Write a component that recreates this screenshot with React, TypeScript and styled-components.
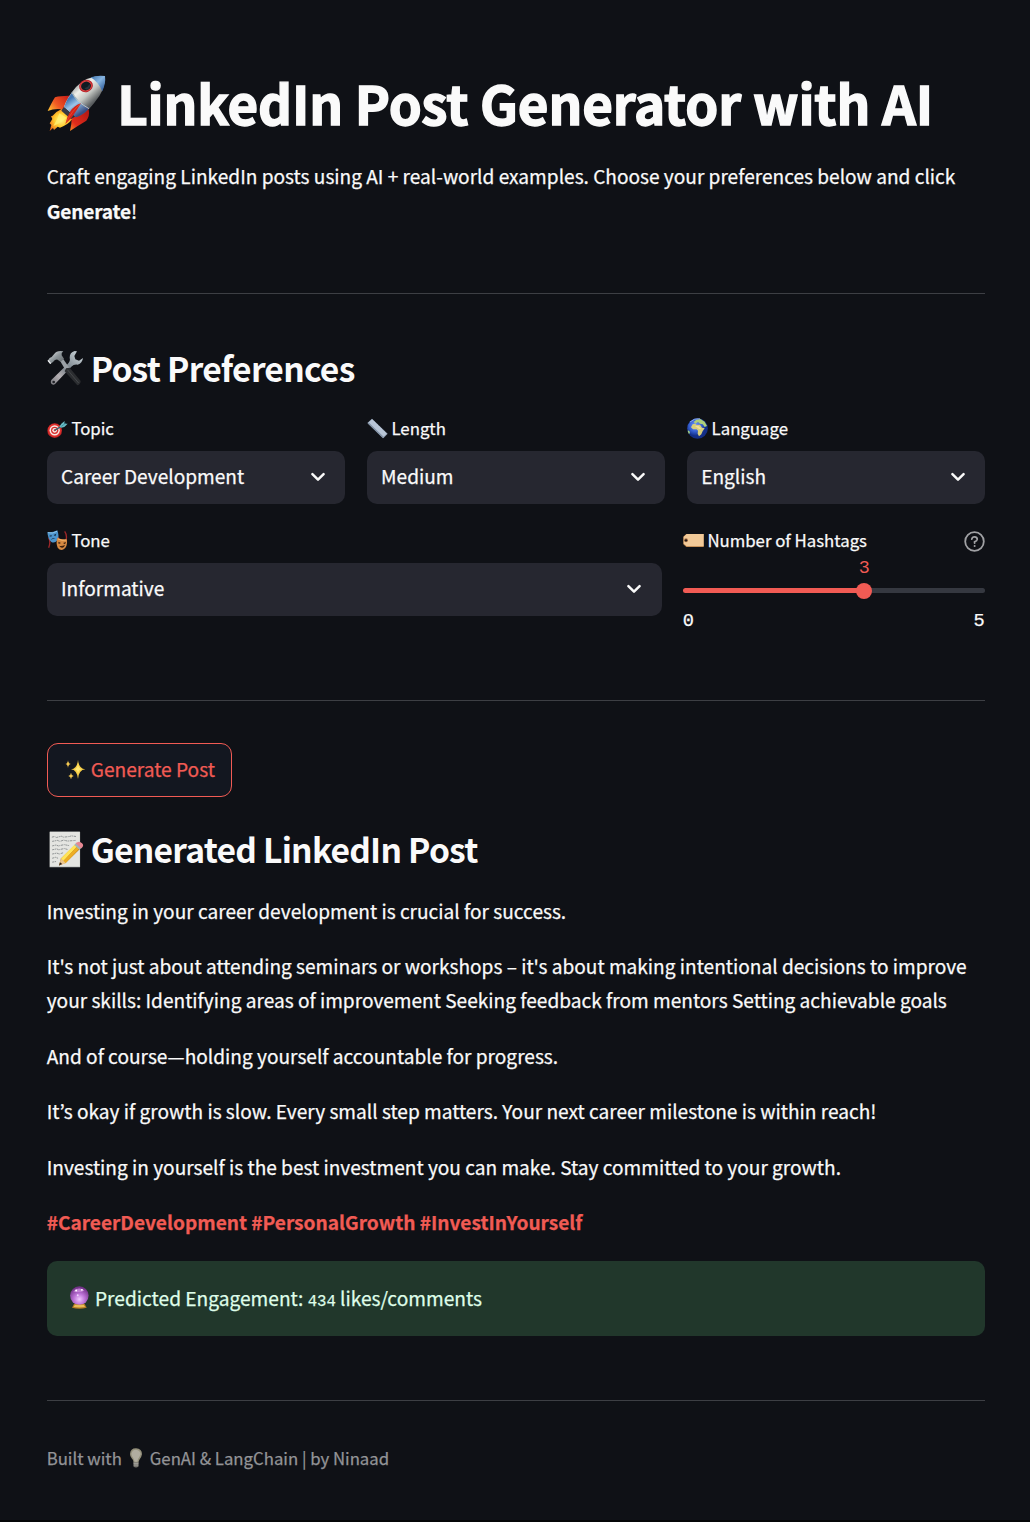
import React from 'react';
import styled, { createGlobalStyle } from 'styled-components';

const Global = createGlobalStyle`
  * { box-sizing: border-box; }
  body {
    margin: 0;
    background: #0f1116;
    color: #fafafa;
    font-family: "Noto Sans CJK KR", "Noto Sans", sans-serif;
    font-size: 19.1px;
    line-height: 34.4px;
    -webkit-text-stroke: 0.25px currentColor;
  }
`;

const Page = styled.main`
  height: 1522px;
  padding: 70px 45px 0 46.7px;
  border-bottom: 2px solid #050608;
  display: flex;
  flex-direction: column;
  overflow: hidden;
`;
const Title = styled.h1`
  margin: 0;
  height: 70px;
  display: flex;
  align-items: center;
  gap: 11.5px;
  font-size: 52.9px;
  line-height: 70px;
  font-weight: 700;
  letter-spacing: -0.16px;
  white-space: nowrap;
  -webkit-text-stroke: 1.4px currentColor;
  span { padding-bottom: 6px; }
  svg { margin-bottom: 2px; }
`;
const Intro = styled.p`
  margin: 19px 0 63.8px;
  line-height: 35px;
  b { letter-spacing: -0.15px; }
`;
const Divider = styled.hr`
  width: 100%;
  height: 1px;
  margin: 0;
  border: 0;
  flex: none;
  background: #3d3f44;
`;
const Heading = styled.h3<{ $top: number }>`
  margin: ${p => p.$top}px 0 0;
  height: 44px;
  display: flex;
  align-items: center;
  gap: 7px;
  font-size: 33.6px;
  line-height: 44px;
  font-weight: 700;
  letter-spacing: -0.74px;
  -webkit-text-stroke: 0;
  span { padding-bottom: 4px; }
  svg { margin-bottom: 2px; }
`;
const Columns = styled.div<{ $cols: string; $gap: number; $top: number }>`
  display: grid;
  grid-template-columns: ${p => p.$cols};
  column-gap: ${p => p.$gap}px;
  margin-top: ${p => p.$top}px;
`;
const Label = styled.div`
  height: 28px;
  display: flex;
  align-items: center;
  gap: 3.7px;
  font-size: 16.8px;
  line-height: 28px;
  & > span:nth-child(2) { padding-bottom: 2px; }
`;
const HelpSlot = styled.span`
  display: flex;
  margin-left: auto;
  padding-top: 1px;
`;
const SelectBox = styled.div<{ $end: number }>`
  height: 53px;
  margin-top: 8px;
  padding: 0 ${p => p.$end}px 0 14.3px;
  border-radius: 10px;
  background: #262730;
  display: flex;
  align-items: center;
  justify-content: space-between;
  font-size: 19.1px;
  span { padding-bottom: 2px; }
`;
const Slider = styled.div`
  margin-top: 33px;
`;
const Track = styled.div<{ $pct: number }>`
  position: relative;
  height: 5px;
  border-radius: 3px;
  background: linear-gradient(to right, #f15b54 ${p => p.$pct}%, #353840 ${p => p.$pct}%);
`;
const Thumb = styled.span<{ $pct: number }>`
  position: absolute;
  left: ${p => p.$pct}%;
  top: 50%;
  width: 16px;
  height: 16px;
  margin: -7.7px 0 0 -7.7px;
  border-radius: 50%;
  background: #f15b54;
`;
const ThumbValue = styled.span`
  position: absolute;
  left: 50%;
  bottom: 17px;
  transform: translateX(-50%);
  color: #f15b54;
  font: 400 18.4px/26px "Liberation Mono", monospace;
  -webkit-text-stroke: 0;
`;
const Ticks = styled.div`
  display: flex;
  justify-content: space-between;
  margin-top: 15px;
  font: 400 18.67px/26px "Liberation Mono", monospace;
`;
const GenerateButton = styled.button`
  align-self: flex-start;
  flex: none;
  width: 185px;
  height: 54px;
  margin: 42px 0 0;
  padding: 0 0 1px 17px;
  display: flex;
  align-items: center;
  gap: 5px;
  border: 1px solid #f15b54;
  border-radius: 11px;
  background: #131720;
  color: #f15b54;
  font-family: inherit;
  font-size: 19.15px;
  white-space: nowrap;
`;
const Post = styled.article`
  margin-top: 21px;
  display: flex;
  flex-direction: column;
  gap: 21.3px;
  line-height: 34.15px;
`;
const Para = styled.p`
  margin: 0;
`;
const Tags = styled.strong`
  color: #f15b54;
  font-weight: 700;
`;
const Success = styled.div`
  height: 75px;
  flex: none;
  margin: 21.7px 0 64px;
  padding-left: 21px;
  display: flex;
  align-items: center;
  gap: 6.3px;
  border-radius: 10px;
  background: #21372b;
  color: #dffde9;
  font-size: 19.15px;
`;
const Code = styled.code`
  font: 400 15.6px "Liberation Mono", monospace;
`;
const Footer = styled.footer`
  margin-top: 43px;
  height: 28px;
  display: flex;
  align-items: center;
  gap: 8px;
  color: #939497;
  font-size: 16.75px;
  line-height: 28px;
`;
const Glyph = styled.svg<{ $s: number }>`
  width: ${p => p.$s}px;
  height: ${p => p.$s}px;
  flex: none;
  display: block;
`;

const Rocket = () => (
  <Glyph $s={59} viewBox="10 15 177 177">
    <defs>
      <linearGradient id="rb" x1="80" y1="50" x2="135" y2="110" gradientUnits="userSpaceOnUse">
        <stop offset="0" stopColor="#8d9294" /><stop offset=".35" stopColor="#f0f0ea" /><stop offset=".65" stopColor="#c3c6c2" /><stop offset="1" stopColor="#595d5f" />
      </linearGradient>
      <linearGradient id="rn" x1="145" y1="15" x2="185" y2="55" gradientUnits="userSpaceOnUse">
        <stop offset="0" stopColor="#3f74ae" /><stop offset=".5" stopColor="#86b4e0" /><stop offset="1" stopColor="#2f5c9b" />
      </linearGradient>
      <linearGradient id="rl" x1="80" y1="85" x2="112" y2="130" gradientUnits="userSpaceOnUse">
        <stop offset="0" stopColor="#4377b3" /><stop offset=".4" stopColor="#9cc5e9" /><stop offset="1" stopColor="#3a4f83" />
      </linearGradient>
      <linearGradient id="rf" x1="20" y1="125" x2="75" y2="80" gradientUnits="userSpaceOnUse">
        <stop offset="0" stopColor="#ffbb30" /><stop offset=".4" stopColor="#f15a24" /><stop offset="1" stopColor="#c91d17" />
      </linearGradient>
      <linearGradient id="rr" x1="80" y1="182" x2="130" y2="130" gradientUnits="userSpaceOnUse">
        <stop offset="0" stopColor="#f68a27" /><stop offset=".35" stopColor="#e02c1b" /><stop offset="1" stopColor="#b71a14" />
      </linearGradient>
      <radialGradient id="fl" cx="52" cy="150" r="40" gradientUnits="userSpaceOnUse">
        <stop offset="0" stopColor="#fff58a" /><stop offset=".5" stopColor="#ffcb2f" /><stop offset="1" stopColor="#ee6a17" />
      </radialGradient>
    </defs>
    <path d="M92 78 Q55 76 34 82 Q25 96 12 123 Q35 114 61 119Z" fill="url(#rf)" />
    <path d="M135 118 Q139 139 128 152 Q106 165 79 183 Q84 163 84 145Z" fill="url(#rr)" />
    <path d="M54 117 Q36 125 27 137 L22 139 L26 147 L18 160 L23 165 L18 183 L28 174 L31 180 L42 170 L49 173 Q75 163 86 147Z" fill="url(#fl)" />
    <path d="M47 130 Q42 148 29 168 Q55 157 69 143Z" fill="#fff176" opacity=".75" />
    <path d="M61 110 L91 140 L82 148 L53 122Z" fill="#343844" />
    <path d="M184 18 Q186 60 152 98 Q126 132 96 142 L61 110 Q72 80 97 51 Q129 15 184 18Z" fill="url(#rb)" />
    <path d="M184 18 Q187 39 176 64 Q164 36 141 22 Q161 15 184 18Z" fill="url(#rn)" />
    <path d="M86 67 Q98 93 138 114 Q115 138 96 142 L61 110 Q69 87 86 67Z" fill="url(#rl)" />
    <path d="M85 68 Q98 95 136 116" fill="none" stroke="#d8d1b8" strokeWidth="2.5" />
    <ellipse cx="127" cy="48" rx="21" ry="18" transform="rotate(-20 127 48)" fill="#b8212a" />
    <ellipse cx="127" cy="48" rx="18" ry="16" transform="rotate(-20 127 48)" fill="#e04642" />
    <ellipse cx="127" cy="48" rx="15" ry="13" transform="rotate(-20 127 48)" fill="#101a22" />
    <path d="M122 55 Q134 51 138 42 Q142 54 130 59Z" fill="#536470" opacity=".35" />
    <path d="M112 100 Q91 107 80 124 Q70 140 65 162 Q84 146 96 125Z" fill="#d3241a" />
    <path d="M109 103 Q85 122 68 156" fill="none" stroke="#f4532f" strokeWidth="2" />
  </Glyph>
);
const Tools = () => (
  <Glyph $s={37} viewBox="9 13 111 111">
    <defs>
      <linearGradient id="th" x2="1" y2="1"><stop stopColor="#f4f6f7" /><stop offset=".5" stopColor="#8d9599" /><stop offset="1" stopColor="#5b6063" /></linearGradient>
      <linearGradient id="tw" x1="100" y1="30" x2="25" y2="110" gradientUnits="userSpaceOnUse"><stop stopColor="#b9c3c9" /><stop offset=".45" stopColor="#768088" /><stop offset=".75" stopColor="#b4afb2" /><stop offset="1" stopColor="#85858a" /></linearGradient>
    </defs>
    <path d="M92 16 Q77 20 77 36 Q80 46 71 55 L22 103 Q18 111 24 116 Q31 119 36 112 L82 63 Q90 55 101 57 Q115 53 117 37 L105 45 L94 41 L91 31 L99 17Z" fill="url(#tw)" />
    <circle cx="29" cy="109" r="4" fill="#202227" />
    <path d="M48 45 L56 38 L77 68 L66 76Z" fill="#9ba1a6" />
    <path d="M66 68 L77 66 L110 106 Q110 116 100 119 L62 77Z" fill="#2b2d30" />
    <path d="M70 72 L104 112" stroke="#515457" strokeWidth="2" />
    <path d="M58 17 Q39 13 30 26 Q25 34 17 37 L11 45 L19 55 L27 49 Q34 40 41 42 L50 49 L60 39 L53 29 Q51 22 58 17Z" fill="url(#th)" />
    <path d="M12 44 L20 54" stroke="#eef0f2" strokeWidth="4" />
  </Glyph>
);
const Target = () => (
  <Glyph $s={21} viewBox="0 0 63 63">
    <circle cx="23" cy="38" r="22" fill="#b82325" /><circle cx="23" cy="37" r="20" fill="#df302d" />
    <circle cx="23" cy="37" r="15.5" fill="#f6e9e5" /><circle cx="23" cy="37" r="11" fill="#d92e2c" />
    <circle cx="23" cy="37" r="7" fill="#fbe8e5" /><circle cx="23" cy="37" r="3" fill="#d33" />
    <path d="M23 37L49 21" stroke="#32606c" strokeWidth="4" />
    <path d="M37 26 L43 17 L53 9 L52 17 L62 17 L52 27 L43 29Z" fill="#68bac2" />
    <path d="M43 25L57 15" stroke="#2b8496" strokeWidth="2" />
  </Glyph>
);
const Ruler = () => (
  <Glyph $s={21} viewBox="0 0 63 63">
    <path d="M1 15L15 2L62 47L49 61Z" fill="#8e9daf" />
    <path d="M4 14L15 4L59 47L50 56Z" fill="#b8c5d6" />
    <path d="M4 15L49 59" stroke="#8494a8" strokeWidth="4" />
    <path d="M17 7L58 47" stroke="#cad4e3" strokeWidth="3" strokeDasharray="3 3" />
  </Glyph>
);
const Globe = () => (
  <Glyph $s={21} viewBox="0 0 63 63">
    <defs><radialGradient id="sea" cx=".4" cy=".35"><stop stopColor="#7799ff" /><stop offset=".6" stopColor="#355fd0" /><stop offset="1" stopColor="#132e86" /></radialGradient></defs>
    <circle cx="31.5" cy="31.5" r="31" fill="url(#sea)" />
    <path d="M17 19L24 17L29 21L39 20L45 29L53 31L47 39L43 49L36 55L32 47L33 38L29 34L18 34L12 28Z" fill="#d9cf79" />
    <path d="M20 12L28 5L40 3L53 11L60 24L53 27L47 19L39 17L33 12L25 17Z" fill="#aecf79" />
    <path d="M24 24L35 24L43 33L36 33Z" fill="#f1dc9c" />
    <path d="M2 38Q8 35 9 46L5 47Z" fill="#a7d47e" />
    <path d="M9 12Q22 0 39 2" stroke="#adc9ff" strokeWidth="3" fill="none" opacity=".7" />
  </Glyph>
);
const Masks = () => (
  <Glyph $s={21} viewBox="0 0 63 63">
    <path d="M5 23Q12 36 5 53M53 4Q62 16 56 35M29 4Q25 13 36 27" fill="none" stroke="#9e2729" strokeWidth="4" />
    <path d="M1 6Q15 9 31 1Q38 20 31 31Q23 41 13 36Q3 29 1 6Z" fill="#4c94cc" />
    <path d="M3 8Q17 12 30 4" stroke="#8cc4e9" strokeWidth="3" fill="none" />
    <path d="M6 18L14 15L13 20ZM20 15L28 11L25 19ZM11 30Q18 20 26 26Q20 25 11 30Z" fill="#14283e" />
    <path d="M31 23Q43 30 60 28Q62 51 50 58Q40 63 32 53Q26 39 31 23Z" fill="#d68a42" />
    <path d="M34 35L42 39L35 42ZM48 39L57 36L54 43ZM36 47Q44 49 54 45Q49 61 36 47Z" fill="#3d210f" />
    <path d="M33 27Q45 33 57 30" stroke="#f3b66c" strokeWidth="3" fill="none" />
  </Glyph>
);
const TagIcon = () => (
  <Glyph $s={21} viewBox="0 0 63 63">
    <path d="M10 12H62V51H10L1 43V20Z" fill="#b77e45" />
    <path d="M11 12H62V49H11L2 41V20Z" fill="#f1c998" />
    <circle cx="9" cy="31" r="6" fill="#ad7545" /><circle cx="9" cy="31" r="3.5" fill="#20191a" />
  </Glyph>
);
const Sparkles = () => (
  <Glyph $s={21} viewBox="0 0 63 63">
    <path d="M39 2Q41 29 61 31Q41 33 39 60Q36 33 18 31Q37 29 39 2Z" fill="#f6cc45" />
    <path d="M39 13Q40 30 51 31Q40 32 39 45Q38 32 28 31Q38 30 39 13Z" fill="#ffe974" />
    <path d="M9 4Q10 14 18 15Q10 16 9 27Q8 16 1 15Q8 14 9 4ZM18 41Q19 50 26 51Q19 52 18 61Q17 52 10 51Q17 50 18 41Z" fill="#f5c952" />
  </Glyph>
);
const Memo = () => (
  <Glyph $s={37} viewBox="1 3 114 114">
    <path d="M9 5H103V115H9Z" fill="#b7bab8" /><path d="M10 5H102V112H10Z" fill="#e4e5e1" />
    <path d="M16 22L24 20L30 23L45 19L52 22L70 20L76 18L91 20M17 35L33 32L41 35L52 31L64 34L89 32M17 49L29 46L36 49L54 45L69 48M17 61L31 58L37 61L54 57L65 60M17 74L31 71L39 74L51 70M17 87L27 84L35 87M17 99L29 97" fill="none" stroke="#62676a" strokeWidth="2" strokeDasharray="7 2 3 2" />
    <path d="M38 109L44 88L90 43L104 57L59 101Z" fill="#b77719" />
    <path d="M44 88L88 43L95 49L51 96Z" fill="#ffe458" /><path d="M51 96L95 49L102 56L58 102Z" fill="#edae23" />
    <path d="M38 109L44 88L59 102Z" fill="#edc78e" /><path d="M38 109L41 99L48 105Z" fill="#33251e" />
    <path d="M85 46L92 39L108 54L101 61Z" fill="#a2b3b8" />
    <path d="M89 41Q100 31 109 41Q117 49 106 57Z" fill="#e68792" />
  </Glyph>
);
const Crystal = () => (
  <Glyph $s={23} viewBox="0 0 69 72" style={{ marginRight: -2, marginBottom: 2 }}>
    <defs><radialGradient id="cb" cx=".5" cy=".7" r=".65"><stop stopColor="#f0c8ff" /><stop offset=".45" stopColor="#bd74d8" /><stop offset="1" stopColor="#713187" /></radialGradient></defs>
    <path d="M18 55H50L57 68Q34 74 11 68Z" fill="#b47b25" /><path d="M20 59H48L52 66Q34 69 16 66Z" fill="#e7bb58" />
    <circle cx="34" cy="30" r="29" fill="url(#cb)" />
    <path d="M15 17Q31 1 50 14Q38 22 15 17Z" fill="#d697e6" opacity=".7" />
    <circle cx="24" cy="14" r="3" fill="#fff" /><circle cx="42" cy="12" r="3" fill="#fff" /><circle cx="29" cy="29" r="3" fill="#efd6fc" />
  </Glyph>
);
const Bulb = () => (
  <Glyph $s={20} viewBox="0 0 60 60" style={{ margin: '-1px -4px 0 -4px' }}>
    <path d="M22 41H38V55Q30 62 22 55Z" fill="#77756f" />
    <path d="M12 18Q13 1 30 1Q48 2 48 19Q47 26 41 34Q39 39 37 43H23Q22 36 17 31Q12 25 12 18Z" fill="#94907b" />
    <path d="M16 18Q18 5 30 5Q43 7 44 18Q41 27 36 33L34 41H26L23 32Q17 25 16 18Z" fill="#b1ada0" />
    <path d="M23 46H37M24 51H36" stroke="#bdbbb5" strokeWidth="2" />
  </Glyph>
);
const Chevron = () => (
  <Glyph $s={16} viewBox="0 0 16 16" fill="none">
    <path d="M2.4 5.2L8 10.7L13.6 5.2" stroke="#fafafa" strokeWidth="2.5" strokeLinecap="round" strokeLinejoin="round" />
  </Glyph>
);
const Help = () => (
  <Glyph $s={21} viewBox="0 0 21 21" fill="none" stroke="#a0a1a4" strokeWidth="1.8" strokeLinecap="round">
    <circle cx="10.5" cy="10.5" r="9.3" />
    <path d="M7.8 8.1Q8.3 5.8 10.6 5.9Q13.3 6.1 13.2 8.4Q13 9.9 10.6 10.8V12" />
    <path d="M10.6 15V15.1" strokeWidth="2" />
  </Glyph>
);

interface SelectProps { icon: React.ReactNode; label: string; value: string; end?: number }

function Select({ icon, label, value, end = 19 }: SelectProps) {
  return (
    <div>
      <Label>{icon}<span>{label}</span></Label>
      <SelectBox $end={end}><span>{value}</span><Chevron /></SelectBox>
    </div>
  );
}

export default function App() {
  const pct = (3 / 5) * 100;
  return (
    <>
      <Global />
      <Page>
        <Title><Rocket /><span>LinkedIn Post Generator with AI</span></Title>
        <Intro>
          Craft engaging LinkedIn posts using AI + real-world examples. Choose your preferences below and click <b>Generate</b>!
        </Intro>
        <Divider />
        <Heading $top={54}><Tools /><span>Post Preferences</span></Heading>
        <Columns $cols="1fr 1fr 1fr" $gap={22} $top={23}>
          <Select icon={<Target />} label="Topic" value="Career Development" />
          <Select icon={<Ruler />} label="Length" value="Medium" />
          <Select icon={<Globe />} label="Language" value="English" />
        </Columns>
        <Columns $cols="615px 302px" $gap={21} $top={23}>
          <Select icon={<Masks />} label="Tone" value="Informative" end={20} />
          <div>
            <Label><TagIcon /><span>Number of Hashtags</span><HelpSlot><Help /></HelpSlot></Label>
            <Slider>
              <Track $pct={pct}><Thumb $pct={pct}><ThumbValue>3</ThumbValue></Thumb></Track>
              <Ticks><span>0</span><span>5</span></Ticks>
            </Slider>
          </div>
        </Columns>
        <Divider style={{ marginTop: 66 }} />
        <GenerateButton><Sparkles /><span>Generate Post</span></GenerateButton>
        <Heading $top={32}><Memo /><span>Generated LinkedIn Post</span></Heading>
        <Post>
          <Para>Investing in your career development is crucial for success.</Para>
          <Para>
            It's not just about attending seminars or workshops – it's about making intentional decisions to improve
            your skills: Identifying areas of improvement Seeking feedback from mentors Setting achievable goals
          </Para>
          <Para>And of course—holding yourself accountable for progress.</Para>
          <Para>It’s okay if growth is slow. Every small step matters. Your next career milestone is within reach!</Para>
          <Para>Investing in yourself is the best investment you can make. Stay committed to your growth.</Para>
          <Para><Tags>#CareerDevelopment #PersonalGrowth #InvestInYourself</Tags></Para>
        </Post>
        <Success><Crystal /><span>Predicted Engagement: <Code>434</Code> likes/comments</span></Success>
        <Divider />
        <Footer><span>Built with</span><Bulb /><span>GenAI &amp; LangChain | by Ninaad</span></Footer>
      </Page>
    </>
  );
}
